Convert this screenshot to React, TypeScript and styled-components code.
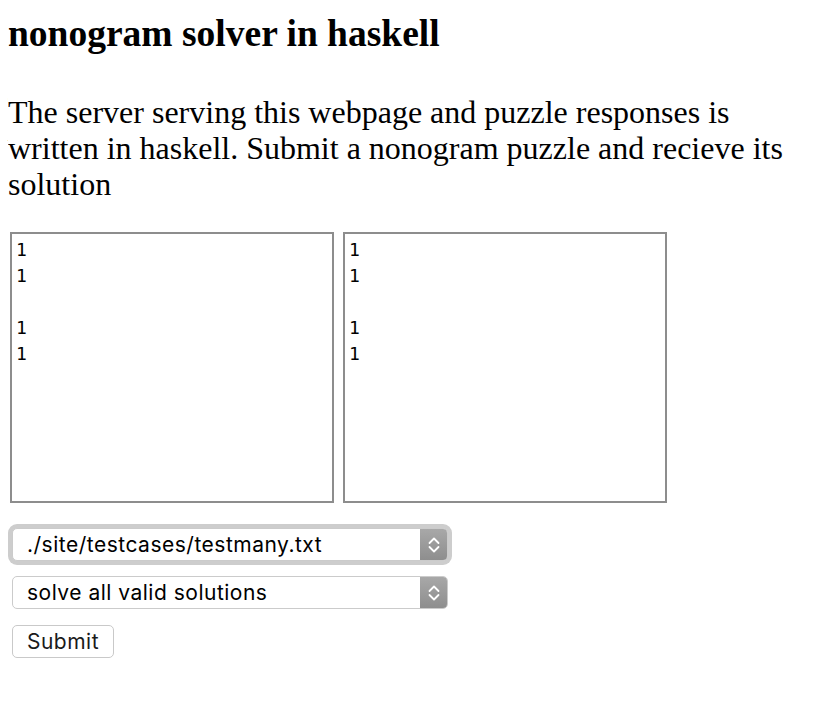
import React, { useState } from 'react';
import styled, { createGlobalStyle } from 'styled-components';

const GlobalStyle = createGlobalStyle`
  body {
    margin: 8px;
    background: #fff;
    color: #000;
    font-family: "Liberation Serif", "Times New Roman", serif;
  }
`;

const Title = styled.h1`
  font-size: 37.5px;
  font-weight: bold;
  margin: 4px 0 0 0;
  line-height: 43px;
`;

const Intro = styled.p`
  font-size: 32px;
  line-height: 36px;
  margin: 39px 0 0 0;
`;

const PuzzleForm = styled.form`
  display: flex;
  flex-direction: column;
  align-items: flex-start;
  margin-top: 30px;
`;

const AreaRow = styled.div`
  display: flex;
  gap: 9px;
  margin-left: 2px;
`;

const PuzzleArea = styled.textarea`
  box-sizing: border-box;
  width: 324px;
  height: 271px;
  border: 2px solid #8d8d8d;
  padding: 3px 4px;
  margin: 0;
  resize: none;
  font-family: "DejaVu Sans Mono", "Liberation Mono", monospace;
  font-size: 18px;
  line-height: 26px;
  color: #000;
  outline: none;
`;

const SelectWrap = styled.div<{ focused?: boolean }>`
  display: flex;
  width: 436px;
  height: 33px;
  box-sizing: border-box;
  border: 1px solid #cbcbcb;
  border-radius: 5px;
  overflow: hidden;
  background: #fff;
  margin-left: 4px;
  box-shadow: ${p => (p.focused ? '0 0 0 4px #cdcdcd' : 'none')};
`;

const Select = styled.select`
  flex: 1;
  appearance: none;
  -webkit-appearance: none;
  border: none;
  background: transparent;
  outline: none;
  padding: 0 0 0 14px;
  margin: 0;
  font-family: Inter, "Liberation Sans", Arial, sans-serif;
  font-size: 21px;
  letter-spacing: 0.5px;
  color: #000;
`;

const ArrowBox = styled.div`
  width: 27px;
  display: flex;
  align-items: center;
  justify-content: center;
  background: linear-gradient(#a8a8a8, #8e8e8e);
`;

const Stack = styled.div`
  display: flex;
  flex-direction: column;
  gap: 15px;
  margin-top: 25px;
`;

const SubmitButton = styled.button`
  margin: 1px 0 0 4px;
  width: 102px;
  height: 33px;
  box-sizing: border-box;
  border: 1px solid #c9c9c9;
  border-radius: 5px;
  background: #fff;
  font-family: Inter, "Liberation Sans", Arial, sans-serif;
  font-size: 21px;
  letter-spacing: 0.5px;
  color: #1a1a1a;
  padding: 0;
`;

function Chevrons() {
  return (
    <svg width="12" height="18" viewBox="0 0 12 18" fill="none">
      <path d="M1.5 7 L6 2.5 L10.5 7" stroke="#fff" strokeWidth="1.8" strokeLinecap="round" strokeLinejoin="round" />
      <path d="M1.5 11 L6 15.5 L10.5 11" stroke="#fff" strokeWidth="1.8" strokeLinecap="round" strokeLinejoin="round" />
    </svg>
  );
}

const clues = '1\n1\n\n1\n1';

export default function App() {
  const [rows, setRows] = useState(clues);
  const [cols, setCols] = useState(clues);
  const [file, setFile] = useState('./site/testcases/testmany.txt');
  const [mode, setMode] = useState('all');

  return (
    <>
      <GlobalStyle />
      <Title>nonogram solver in haskell</Title>
      <Intro>
        The server serving this webpage and puzzle responses is written in haskell. Submit a
        nonogram puzzle and recieve its solution
      </Intro>
      <PuzzleForm onSubmit={e => e.preventDefault()}>
        <AreaRow>
          <PuzzleArea value={rows} onChange={e => setRows(e.target.value)} />
          <PuzzleArea value={cols} onChange={e => setCols(e.target.value)} />
        </AreaRow>
        <Stack>
          <SelectWrap focused>
            <Select value={file} onChange={e => setFile(e.target.value)}>
              <option>./site/testcases/testmany.txt</option>
            </Select>
            <ArrowBox><Chevrons /></ArrowBox>
          </SelectWrap>
          <SelectWrap>
            <Select value={mode} onChange={e => setMode(e.target.value)}>
              <option value="all">solve all valid solutions</option>
              <option value="one">solve one solution</option>
            </Select>
            <ArrowBox><Chevrons /></ArrowBox>
          </SelectWrap>
          <SubmitButton type="submit">Submit</SubmitButton>
        </Stack>
      </PuzzleForm>
    </>
  );
}
